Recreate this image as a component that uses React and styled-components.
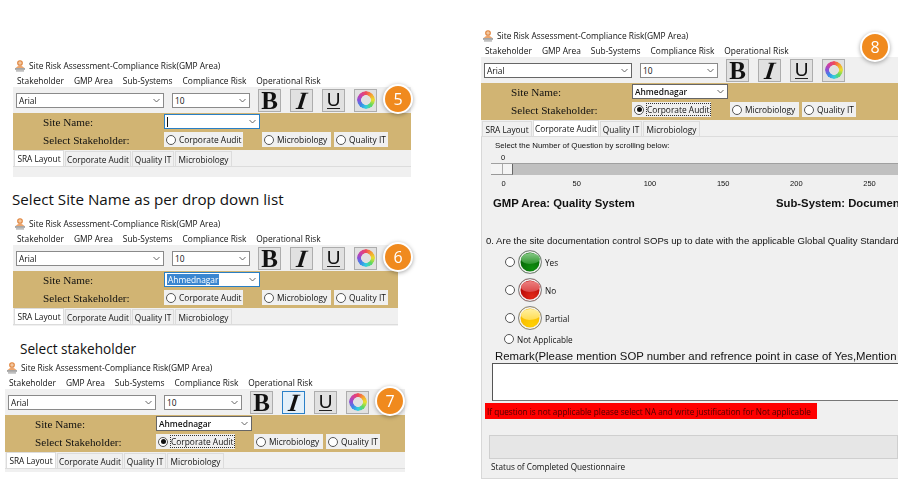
import React from "react";
import styled, { createGlobalStyle } from "styled-components";

const GlobalStyle = createGlobalStyle`
  html, body {
    margin: 0;
    padding: 0;
    background: #ffffff;
  }
`;

const Canvas = styled.div`
  position: relative;
  width: 901px;
  height: 488px;
  overflow: hidden;
  background: #ffffff;
  font-family: "Open Sans", sans-serif;
  color: #111;
`;

const Caption = styled.div`
  position: absolute;
  left: ${(p) => p.$x}px;
  top: ${(p) => p.$y}px;
  font-family: "Open Sans", sans-serif;
  font-size: ${(p) => p.$size}px;
  line-height: 18px;
  color: #111;
  white-space: nowrap;
`;

const Win = styled.section`
  position: absolute;
  left: ${(p) => p.$x}px;
  top: ${(p) => p.$y}px;
  width: ${(p) => p.$w}px;
  filter: blur(0.25px);
`;

const TitleBar = styled.div`
  display: flex;
  align-items: center;
  gap: 3px;
  height: 15px;
  padding-left: 1px;
  font-size: 8.4px;
  white-space: nowrap;
`;

const MenuBar = styled.div`
  display: flex;
  height: 14px;
  align-items: center;
  padding-left: 4px;
  font-size: 8.4px;
  white-space: nowrap;
`;

const MenuItem = styled.span`
  margin-right: 10px;
`;

const Toolbar = styled.div`
  display: flex;
  align-items: center;
  height: 26px;
  padding-left: 3px;
  background: #f0f0f0;
`;

const Combo = styled.div`
  display: flex;
  align-items: center;
  justify-content: space-between;
  box-sizing: border-box;
  width: ${(p) => p.$w}px;
  height: ${(p) => p.$h || 15}px;
  margin-right: ${(p) => p.$mr || 0}px;
  padding: 0 3px 0 2px;
  background: #fff;
  border: 1px solid ${(p) => (p.$focus ? "#2a7fc4" : p.$dark ? "#666" : "#8a8a8a")};
  font-size: 8.4px;
  font-weight: ${(p) => (p.$bold ? 600 : 400)};
  white-space: nowrap;
`;

const Caret = styled.span`
  width: 1px;
  height: 10px;
  background: #111;
`;

const Selected = styled.span`
  padding: 0 1px;
  background: #3a86d0;
  color: #fff;
`;

const Chevron = () => (
  <svg width="7" height="5" viewBox="0 0 7 5" fill="none">
    <path d="M0.5 1 L3.5 4 L6.5 1" stroke="#555" strokeWidth="0.9" />
  </svg>
);

const ToolButton = styled.div`
  display: flex;
  align-items: center;
  justify-content: center;
  box-sizing: border-box;
  width: 23px;
  height: 23px;
  margin-right: 9px;
  background: ${(p) => (p.$active ? "#e3f0fa" : "#e1e1e1")};
  border: 1px solid ${(p) => (p.$active ? "#2a80c8" : "#adadad")};
  color: #111;
`;

const BoldGlyph = styled.span`
  font-family: "Liberation Serif", serif;
  font-weight: 700;
  font-size: 25px;
  line-height: 23px;
`;

const ItalicGlyph = styled.span`
  display: inline-block;
  font-family: "Liberation Serif", serif;
  font-weight: 700;
  font-style: italic;
  font-size: 25px;
  line-height: 23px;
  transform: skewX(-8deg);
`;

const UnderGlyph = styled.span`
  font-family: "Liberation Sans", sans-serif;
  font-size: 19px;
  line-height: 17px;
  border-bottom: 1.5px solid #222;
  height: 17px;
`;

const ColorRing = styled.span`
  width: 18px;
  height: 18px;
  border-radius: 50%;
  background: conic-gradient(#f04a5a, #f5a030, #e8e030, #5fd860, #30d0e0, #3a8ae8, #8a50d8, #d040a0, #f04a5a);
  -webkit-mask: radial-gradient(circle, transparent 4.6px, #000 5.2px);
  mask: radial-gradient(circle, transparent 4.6px, #000 5.2px);
`;

const GoldBand = styled.div`
  display: flex;
  flex-direction: column;
  gap: 3px;
  height: 37px;
  box-sizing: border-box;
  padding-top: 1px;
  background: #d1b473;
`;

const GoldRow = styled.div`
  display: flex;
  align-items: center;
  height: ${(p) => p.$h}px;
`;

const GoldLabel = styled.span`
  box-sizing: border-box;
  width: 151px;
  padding-left: 30px;
  font-family: "Liberation Serif", serif;
  font-size: 11.2px;
  color: #111;
  white-space: nowrap;
`;

const RadioBox = styled.div`
  display: flex;
  align-items: center;
  gap: 3px;
  box-sizing: border-box;
  width: ${(p) => p.$w}px;
  height: 15px;
  margin-right: ${(p) => p.$mr || 0}px;
  padding-left: 2px;
  background: #f0f0f0;
  font-size: 8.4px;
  white-space: nowrap;
`;

const RadioLabel = styled.span`
  outline: ${(p) => (p.$focus ? "1px dotted #333" : "none")};
`;

const Radio = styled.span`
  display: inline-block;
  flex: none;
  position: relative;
  box-sizing: border-box;
  width: 10px;
  height: 10px;
  border: 1px solid #555;
  border-radius: 50%;
  background: #fff;

  &::after {
    content: "";
    display: ${(p) => (p.$on ? "block" : "none")};
    position: absolute;
    inset: 1.5px;
    border-radius: 50%;
    background: #111;
  }
`;

const TabStrip = styled.div`
  display: flex;
  align-items: flex-end;
  height: 17px;
  padding-left: 1px;
  background: #f0f0f0;
  border-bottom: 1px solid #dcdcdc;
  box-sizing: border-box;
`;

const Tab = styled.div`
  display: flex;
  align-items: center;
  justify-content: center;
  box-sizing: border-box;
  width: ${(p) => p.$w}px;
  height: ${(p) => (p.$active ? 16 : 15)}px;
  margin-right: 1px;
  background: ${(p) => (p.$active ? "#fff" : "#f0f0f0")};
  border: 1px solid #dcdcdc;
  border-bottom: none;
  font-size: 8.3px;
  white-space: nowrap;
`;

const Rest = styled.div`
  height: ${(p) => p.$h}px;
  background: #f0f0f0;
`;

const Badge = styled.div`
  position: absolute;
  left: ${(p) => p.$x}px;
  top: ${(p) => p.$y}px;
  display: flex;
  align-items: center;
  justify-content: center;
  box-sizing: border-box;
  width: 30px;
  height: 30px;
  border: 2px solid #fff;
  border-radius: 50%;
  background: #f08a1e;
  box-shadow: 0 1px 4px rgba(0, 0, 0, 0.35);
  color: #fff;
  font-size: 16px;
`;

const Page = styled.div`
  box-sizing: border-box;
  height: 342px;
  border-left: 1px solid #d8d8d8;
  border-bottom: 1px solid #d8d8d8;
  background: #f0f0f0;
  font-family: "Liberation Sans", sans-serif;
  overflow: hidden;
`;

const SliderHint = styled.div`
  margin: 3px 0 0 13px;
  height: 12px;
  font-size: 7.9px;
  line-height: 12px;
  white-space: nowrap;
`;

const SliderValue = styled.div`
  margin: 0 0 0 19px;
  height: 11px;
  font-size: 7.5px;
  line-height: 11px;
`;

const SliderTrack = styled.div`
  margin: 0 0 0 9px;
  height: 12px;
  background: #c0c0c0;
  border-top: 1px solid #a0a0a0;
  box-sizing: border-box;
`;

const SliderThumb = styled.div`
  display: flex;
  width: 22px;
  height: 11px;
  background: #f4f4f4;
  border-right: 1px solid #666;
  border-bottom: 1px solid #999;
  box-sizing: border-box;

  &::before {
    content: "";
    width: 11px;
    border-right: 1px solid #aaa;
  }
`;

const TickRow = styled.div`
  display: flex;
  margin: 3px 0 0 -15px;
  height: 11px;
  font-size: 7.5px;
  line-height: 11px;
`;

const Tick = styled.span`
  flex: none;
  width: 73.2px;
  text-align: center;
`;

const AreaRow = styled.div`
  display: flex;
  margin: 7px 0 0 11px;
  height: 15px;
  font-size: 11.3px;
  line-height: 15px;
  font-weight: 700;
  white-space: nowrap;
`;

const AreaLabel = styled.span`
  flex: none;
  width: 283px;
`;

const Question = styled.div`
  margin: 23px 0 0 4px;
  height: 14px;
  font-size: 9.55px;
  line-height: 14px;
  white-space: nowrap;
`;

const Options = styled.div`
  display: flex;
  flex-direction: column;
  margin: 0 0 0 23px;
`;

const OptionRow = styled.div`
  display: flex;
  align-items: center;
  height: 28px;
  font-family: "Open Sans", sans-serif;
  font-size: 8.2px;
`;

const Lamp = styled.span`
  flex: none;
  position: relative;
  box-sizing: border-box;
  width: 24px;
  height: 24px;
  margin: 0 3px 0 3px;
  overflow: hidden;
  border: 1.5px solid #858585;
  border-radius: 50%;
  background: radial-gradient(circle at 60% 80%, ${(p) => p.$glow} 0%, ${(p) => p.$base} 75%);
  box-shadow: inset 0 0 0 1.5px #f2f2f2;

  &::after {
    content: "";
    position: absolute;
    left: 1.5px;
    right: 1.5px;
    top: 1.5px;
    height: 11px;
    border-radius: 50% 50% 55% 45% / 55% 55% 45% 45%;
    background: ${(p) => p.$shine};
  }
`;

const NotApplicable = styled.div`
  display: flex;
  align-items: center;
  gap: 3px;
  margin: 0 0 0 -1px;
  height: 14px;
  font-family: "Open Sans", sans-serif;
  font-size: 8.2px;
`;

const RemarkLabel = styled.div`
  margin: 3px 0 0 13px;
  height: 14px;
  font-size: 11.35px;
  line-height: 14px;
  white-space: nowrap;
`;

const RemarkBox = styled.div`
  box-sizing: border-box;
  margin: 0 0 0 10px;
  height: 38px;
  background: #fff;
  border-top: 1px solid #555;
  border-left: 1px solid #555;
  border-bottom: 1px solid #777;
`;

const Warning = styled.div`
  display: flex;
  align-items: center;
  box-sizing: border-box;
  width: 332px;
  height: 16px;
  margin: 2px 0 0 3px;
  padding-left: 2px;
  background: #ff0000;
  color: #4a0000;
  font-family: "Open Sans", sans-serif;
  font-size: 8.2px;
  white-space: nowrap;
`;

const Progress = styled.div`
  box-sizing: border-box;
  height: 24px;
  margin: 16px 0 0 7px;
  background: #e6e6e6;
  border: 1px solid #cfcfcf;
`;

const Status = styled.div`
  margin: 2px 0 0 9px;
  font-family: "Open Sans", sans-serif;
  font-size: 8.2px;
  line-height: 12px;
  white-space: nowrap;
`;

const AppLogo = () => (
  <svg width="12" height="12" viewBox="0 0 12 12">
    <circle cx="6" cy="3" r="2.3" fill="#f3c7a0" stroke="#e0843c" strokeWidth="1.1" />
    <path d="M1.5 8 Q6 3.5 10.5 8 Z" fill="#eda56c" />
    <rect x="1" y="8.2" width="10" height="1.5" fill="#8f8f8f" />
    <rect x="2" y="10.2" width="8" height="1.4" fill="#b0b0b0" />
  </svg>
);

const menus = ["Stakeholder", "GMP Area", "Sub-Systems", "Compliance Risk", "Operational Risk"];
const tabs = [
  ["SRA Layout", 50],
  ["Corporate Audit", 66],
  ["Quality IT", 42],
  ["Microbiology", 57],
];

const AppWindow = ({ x, y, w, badge, badgeX = 370, badgeY = 26, site, focusItalic, picked, darkFont, activeTab = 0, restH, children }) => (
  <Win $x={x} $y={y} $w={w}>
    <TitleBar>
      <AppLogo />
      <span>Site Risk Assessment-Compliance Risk(GMP Area)</span>
    </TitleBar>
    <MenuBar>
      {menus.map((m) => (
        <MenuItem key={m}>{m}</MenuItem>
      ))}
    </MenuBar>
    <Toolbar>
      <Combo $w={148} $mr={8} $dark={darkFont}>
        Arial <Chevron />
      </Combo>
      <Combo $w={78} $mr={8}>
        10 <Chevron />
      </Combo>
      <ToolButton>
        <BoldGlyph>B</BoldGlyph>
      </ToolButton>
      <ToolButton $active={focusItalic}>
        <ItalicGlyph>I</ItalicGlyph>
      </ToolButton>
      <ToolButton>
        <UnderGlyph>U</UnderGlyph>
      </ToolButton>
      <ToolButton>
        <ColorRing />
      </ToolButton>
    </Toolbar>
    <GoldBand>
      <GoldRow $h={15}>
        <GoldLabel>Site Name:</GoldLabel>
        <Combo $w={96} $focus={site !== "done"} $bold={site === "done"} $dark={site === "done"}>
          {site === "empty" && <Caret />}
          {site === "sel" && <Selected>Ahmednagar</Selected>}
          {site === "done" && <span>Ahmednagar</span>}
          <Chevron />
        </Combo>
      </GoldRow>
      <GoldRow $h={15}>
        <GoldLabel>Select Stakeholder:</GoldLabel>
        <RadioBox $w={79} $mr={19}>
          <Radio $on={picked} />
          <RadioLabel $focus={picked}>Corporate Audit</RadioLabel>
        </RadioBox>
        <RadioBox $w={69} $mr={3}>
          <Radio />
          Microbiology
        </RadioBox>
        <RadioBox $w={54}>
          <Radio />
          Quality IT
        </RadioBox>
      </GoldRow>
    </GoldBand>
    <TabStrip>
      {tabs.map(([name, width], i) => (
        <Tab key={name} $w={width} $active={i === activeTab}>
          {name}
        </Tab>
      ))}
    </TabStrip>
    {children || <Rest $h={restH} />}
    <Badge $x={badgeX} $y={badgeY}>
      {badge}
    </Badge>
  </Win>
);

const App = () => (
  <Canvas>
    <GlobalStyle />
    <AppWindow x={13} y={58} w={398} badge="5" site="empty" restH={10} />
    <Caption $x={12} $y={190} $size={15.2}>Select Site Name as per drop down list</Caption>
    <AppWindow x={13} y={216} w={385} badge="6" site="sel" restH={1} />
    <Caption $x={20} $y={340} $size={13.6}>Select stakeholder</Caption>
    <AppWindow x={5} y={360} w={400} badge="7" site="done" focusItalic picked restH={3} />
    <AppWindow x={481} y={28} w={417} badge="8" badgeX={379} badgeY={4} site="done" picked darkFont activeTab={1}>
      <Page>
        <SliderHint>Select the Number of Question by scrolling below:</SliderHint>
        <SliderValue>0</SliderValue>
        <SliderTrack>
          <SliderThumb />
        </SliderTrack>
        <TickRow>
          {["0", "50", "100", "150", "200", "250"].map((t) => (
            <Tick key={t}>{t}</Tick>
          ))}
        </TickRow>
        <AreaRow>
          <AreaLabel>GMP Area: Quality System</AreaLabel>
          <span>Sub-System: Documen</span>
        </AreaRow>
        <Question>0. Are the site documentation control SOPs up to date with the applicable Global Quality Standard</Question>
        <Options>
          <OptionRow>
            <Radio />
            <Lamp $base="#055f05" $glow="#0f8f0f" $shine="linear-gradient(#86c986, #2f962f)" />
            Yes
          </OptionRow>
          <OptionRow>
            <Radio />
            <Lamp $base="#b00000" $glow="#e02818" $shine="linear-gradient(#ec8080, #dc4848)" />
            No
          </OptionRow>
          <OptionRow>
            <Radio />
            <Lamp $base="#f7b500" $glow="#ffd000" $shine="linear-gradient(#fff0a0, #ffdc50)" />
            Partial
          </OptionRow>
          <NotApplicable>
            <Radio />
            Not Applicable
          </NotApplicable>
        </Options>
        <RemarkLabel>Remark(Please mention SOP number and refrence point in case of Yes,Mention</RemarkLabel>
        <RemarkBox />
        <Warning>If question is not applicable please select NA and write justification for Not applicable</Warning>
        <Progress />
        <Status>Status of Completed Questionnaire</Status>
      </Page>
    </AppWindow>
  </Canvas>
);

export default App;
